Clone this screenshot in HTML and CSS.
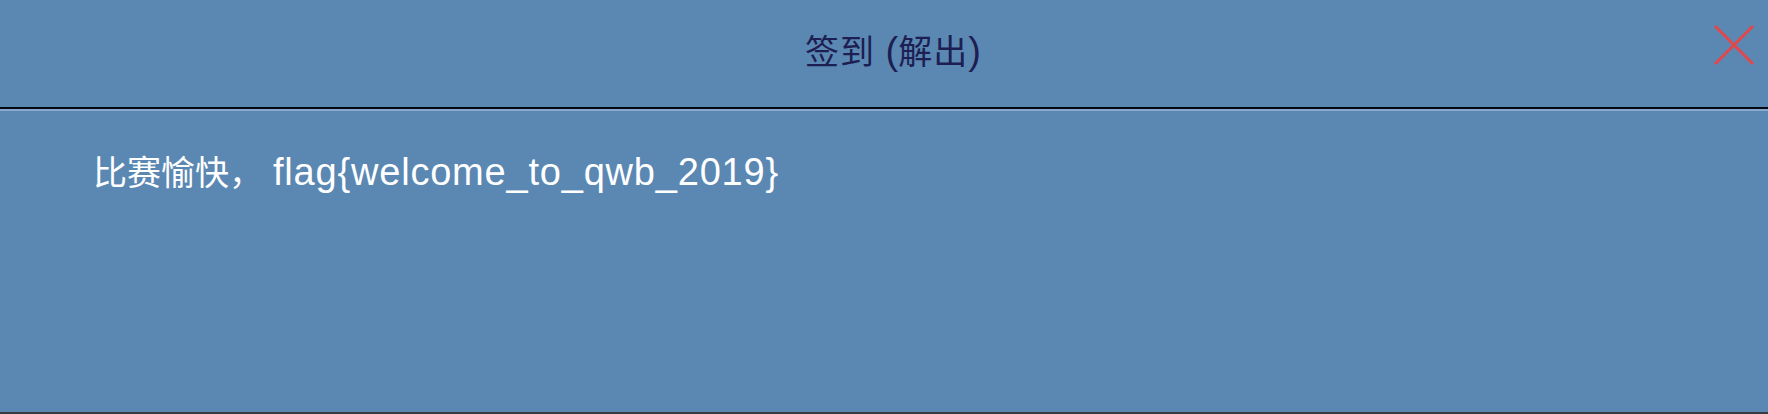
FILE: index.html
```html
<!DOCTYPE html>
<html lang="zh">
<head>
<meta charset="utf-8">
<title>签到 (解出)</title>
<link rel="stylesheet" href="styles.css">
</head>
<body>
<div class="dialog">
  <header class="dialog-header">
    <div class="spacer"></div>
    <h1 class="title"><span class="cjk">签到</span> (<span class="cjk">解出</span>)</h1>
    <div class="actions">
      <button class="close" aria-label="关闭">
        <svg width="42" height="42" viewBox="0 0 42 42"><path d="M2 2 L40 40 M40 2 L2 40" stroke="#e2474b" stroke-width="3" fill="none"/></svg>
      </button>
    </div>
  </header>
  <div class="dialog-body">
    <p class="message"><span class="cjk">比赛愉快，</span><span class="flag">flag{welcome_to_qwb_2019}</span></p>
  </div>
</div>
</body>
</html>
```
FILE: styles.css
```css
html, body {
  margin: 0;
  padding: 0;
}
body {
  background: #5b88b3;
  font-family: "Liberation Sans", "Noto Sans CJK SC", sans-serif;
}
.dialog {
  height: 414px;
  display: flex;
  flex-direction: column;
  box-sizing: border-box;
  border-bottom: 2px solid #383a3d;
}
.dialog-header {
  height: 107px;
  border-bottom: 2px solid #050814;
  display: grid;
  grid-template-columns: 1fr auto 1fr;
  align-items: center;
  padding-left: 18px;
  box-sizing: content-box;
}
.title {
  margin: 0;
  font-weight: normal;
  font-size: 38px;
  line-height: 1;
  color: #1d1e52;
  padding-bottom: 6px;
}
.title .cjk {
  font-size: 34px;
  letter-spacing: 1px;
}
.cjk {
  font-family: "Noto Sans CJK SC", sans-serif;
  font-size: 34px;
}
.actions {
  display: flex;
  justify-content: flex-end;
  padding-right: 13px;
  padding-bottom: 18px;
}
.close {
  border: 0;
  background: none;
  padding: 0;
  display: block;
  cursor: pointer;
}
.close svg {
  display: block;
}
.dialog-body {
  flex: 1;
  border-top: 2px solid #86a8cd;
  padding: 40px 0 0 93px;
}
.message {
  margin: 0;
  color: #ffffff;
  font-size: 34px;
  line-height: 40px;
}
.flag {
  font-size: 38px;
  letter-spacing: 0.8px;
  margin-left: 10px;
}
```
